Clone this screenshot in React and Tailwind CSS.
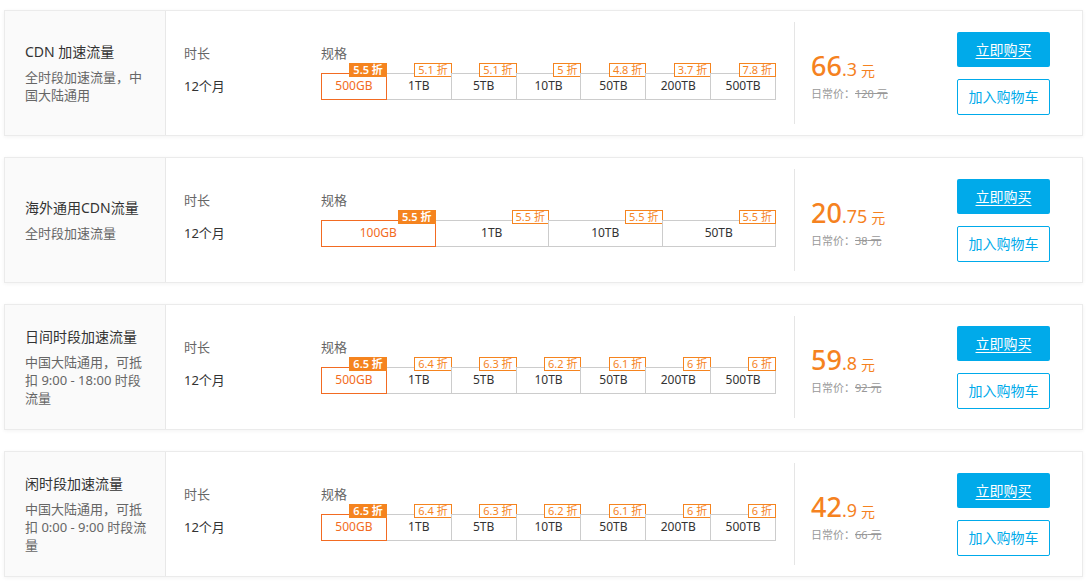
const FONT = '"Noto Sans", "Noto Sans CJK SC", sans-serif'

const SEVEN = ['500GB', '1TB', '5TB', '10TB', '50TB', '200TB', '500TB']
const SIXES = ['6.5', '6.4', '6.3', '6.2', '6.1', '6', '6']

const products = [
  {
    title: 'CDN 加速流量',
    desc: '全时段加速流量，中国大陆通用',
    specs: SEVEN,
    discounts: ['5.5', '5.1', '5.1', '5', '4.8', '3.7', '7.8'],
    price: ['66', '.3'],
    orig: '120',
  },
  {
    title: '海外通用CDN流量',
    desc: '全时段加速流量',
    specs: ['100GB', '1TB', '10TB', '50TB'],
    discounts: ['5.5', '5.5', '5.5', '5.5'],
    price: ['20', '.75'],
    orig: '38',
  },
  {
    title: '日间时段加速流量',
    desc: '中国大陆通用，可抵扣 9:00 - 18:00 时段流量',
    specs: SEVEN,
    discounts: SIXES,
    price: ['59', '.8'],
    orig: '92',
  },
  {
    title: '闲时段加速流量',
    desc: '中国大陆通用，可抵扣 0:00 - 9:00 时段流量',
    specs: SEVEN,
    discounts: SIXES,
    price: ['42', '.9'],
    orig: '66',
  },
]

function SpecTable({ specs, discounts }) {
  return (
    <div className="flex w-[455px] h-[27px]">
      {specs.map((s, i) => {
        const active = i === 0
        return (
          <div
            key={s}
            className={
              'relative flex-1 flex items-center justify-center text-[12px] border -ml-px first:ml-0 ' +
              (active ? 'z-10 border-[#f26b22] text-[#f26b22]' : 'border-[#cccccc] text-[#333]')
            }
          >
            {s}
            <span
              className={
                'absolute right-[-1px] top-[-11px] h-[14px] px-[3px] flex items-center text-[11px] leading-none border ' +
                (active
                  ? 'bg-[#f5841f] border-[#f5841f] text-white font-semibold'
                  : 'bg-white border-[#f5841f] text-[#f5841f]')
              }
            >
              {discounts[i]} 折
            </span>
          </div>
        )
      })}
    </div>
  )
}

function ProductCard({ p }) {
  return (
    <div className="flex h-[126px] w-[1079px] bg-white border border-[#ebebeb] shadow-[0_1px_4px_rgba(0,0,0,0.05)]">
      <div className="w-[161px] shrink-0 bg-[#fafafa] border-r border-[#e8e8e8] pl-5 pr-4 flex flex-col justify-center">
        <div className="text-[14px] leading-[20px] text-[#333]">{p.title}</div>
        <div className="mt-[6px] text-[13px] leading-[18px] text-[#666]">{p.desc}</div>
      </div>

      <div className="flex items-center pl-[18px]">
        <div className="flex items-start mt-[-3px]">
          <div className="w-[137px]">
            <div className="text-[13px] leading-[18px] text-[#666]">时长</div>
            <div className="mt-[15px] text-[13px] leading-[18px] text-[#333]">12个月</div>
          </div>
          <div>
            <div className="text-[13px] leading-[18px] text-[#666]">规格</div>
            <div className="mt-[11px]">
              <SpecTable specs={p.specs} discounts={p.discounts} />
            </div>
          </div>
        </div>
      </div>

      <div className="ml-[18px] my-[11px] w-px bg-[#e5e5e5]" />

      <div className="flex-1 flex items-center pl-[16px]">
        <div className="mt-[6px]">
          <div className="text-[#f5821f] leading-[30px] whitespace-nowrap">
            <span className="text-[27px] font-medium">{p.price[0]}</span>
            <span className="text-[18px]">{p.price[1]}</span>
            <span className="text-[14px] ml-[4px]">元</span>
          </div>
          <div className="text-[11px] leading-[16px] text-[#999] whitespace-nowrap">
            日常价：<span className="line-through">{p.orig} 元</span>
          </div>
        </div>
      </div>

      <div className="flex flex-col justify-center gap-[12px] pr-[32px]">
        <button className="w-[93px] h-[35px] rounded-[2px] bg-[#00aaea] text-white text-[14px] underline underline-offset-[3px]">
          立即购买
        </button>
        <button className="w-[93px] h-[36px] rounded-[2px] bg-white border border-[#00aaea] text-[#00aaea] text-[14px]">
          加入购物车
        </button>
      </div>
    </div>
  )
}

export default function App() {
  return (
    <div className="min-h-screen bg-white pl-[4px] pt-[10px] flex flex-col gap-[21px]" style={{ fontFamily: FONT }}>
      {products.map(p => (
        <ProductCard key={p.title} p={p} />
      ))}
    </div>
  )
}
